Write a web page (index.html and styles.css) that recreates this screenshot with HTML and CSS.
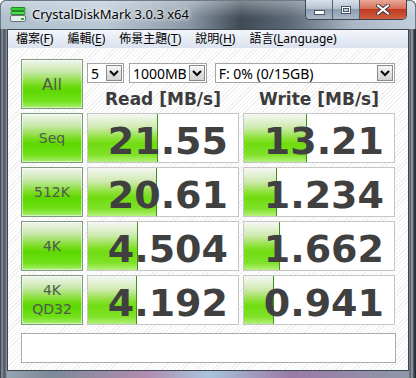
FILE: index.html
```html
<!DOCTYPE html>
<html lang="zh-Hant">
<head>
  <meta charset="UTF-8" />
  <title>CrystalDiskMark 3.0.3 x64</title>
  <link rel="stylesheet" href="styles.css">
</head>
<body>

  <div class="window">
    <div class="titlebar">
      <svg class="app-icon" width="16" height="15" viewBox="0 0 16 15">
        <rect x="1" y="0.5" width="14" height="3" rx="1" fill="#3cc83c" stroke="#1e8c1e"/>
        <rect x="1" y="4.5" width="14" height="3" rx="1" fill="#5ad85a" stroke="#1e8c1e"/>
        <rect x="0.5" y="8.5" width="15" height="6" rx="1.5" fill="#e8ecef" stroke="#6c747c"/>
        <rect x="11" y="11" width="3" height="2" fill="#2bb52b"/>
      </svg>
      <span class="title">CrystalDiskMark 3.0.3 x64</span>
      <div class="winbtns">
        <div class="wb wb-min"><span class="min-bar"></span></div>
        <div class="wb wb-max"><span class="max-box"></span></div>
        <div class="wb wb-close">
          <svg width="14" height="11" viewBox="0 0 14 11">
            <path d="M2 1.5 L12 9.5 M12 1.5 L2 9.5" stroke="#3a3a3a" stroke-width="4" stroke-linecap="round"/>
            <path d="M2 1.5 L12 9.5 M12 1.5 L2 9.5" stroke="#fff" stroke-width="2.2" stroke-linecap="round"/>
          </svg>
        </div>
      </div>
    </div>

    <div class="client">
      <div class="menubar">
        <span class="menu">檔案(<u>F</u>)</span>
        <span class="menu">編輯(<u>E</u>)</span>
        <span class="menu">佈景主題(<u>T</u>)</span>
        <span class="menu">說明(<u>H</u>)</span>
        <span class="menu">語言(<u>L</u>anguage)</span>
      </div>

      <div class="main">
        <div class="grid">
          <div class="btn">All</div>
          <div class="top-right">
            <div class="selects">
              <div class="select sel-count"><span>5</span><i class="arrow"></i></div>
              <div class="select sel-size"><span>1000MB</span><i class="arrow"></i></div>
              <div class="select sel-drive"><span>F: 0% (0/15GB)</span><i class="arrow"></i></div>
            </div>
            <div class="heads">
              <div class="head">Read [MB/s]</div>
              <div class="head">Write [MB/s]</div>
            </div>
          </div>

          <div class="btn">Seq</div>
          <div class="cell"><div class="bar" style="width: 69px"></div><span class="val">21.55</span></div>
          <div class="cell"><div class="bar" style="width: 62px"></div><span class="val">13.21</span></div>

          <div class="btn">512K</div>
          <div class="cell"><div class="bar" style="width: 68px"></div><span class="val">20.61</span></div>
          <div class="cell"><div class="bar" style="width: 32px"></div><span class="val">1.234</span></div>

          <div class="btn">4K</div>
          <div class="cell"><div class="bar" style="width: 49px"></div><span class="val">4.504</span></div>
          <div class="cell"><div class="bar" style="width: 35px"></div><span class="val">1.662</span></div>

          <div class="btn two-line">4K<br>QD32</div>
          <div class="cell"><div class="bar" style="width: 48px"></div><span class="val">4.192</span></div>
          <div class="cell"><div class="bar" style="width: 29px"></div><span class="val">0.941</span></div>
        </div>

        <div class="comment"></div>
      </div>
    </div>
  </div>

</body>
</html>
```

FILE: styles.css
```css
html, body {
  margin: 0;
  padding: 0;
}

body {
  width: 416px;
  height: 378px;
  overflow: hidden;
  font-family: "Noto Sans", "Noto Sans CJK TC", sans-serif;
}

/* Aero glass frame */
.window {
  width: 416px;
  height: 378px;
  box-sizing: border-box;
  padding: 0 7px 7px 7px;
  display: flex;
  flex-direction: column;
  border-radius: 6px 6px 0 0;
  background:
    linear-gradient(90deg, #2c3036 0, #8c98a4 2px, #4a525c 4px, #6c7884 6px, transparent 7px,
                    transparent 409px, #4a525c 410px, #9aa6b2 412px, #3a4048 414px, #23272c 416px),
    linear-gradient(90deg, #9aa8b4 0, #7c8a98 12%, #b08cb0 35%, #a8c4dc 50%, #9a7aa8 70%, #8e9aa8 100%);
}

.titlebar {
  height: 29px;
  margin: 0 -7px;
  padding: 0 8px 0 9px;
  display: flex;
  align-items: flex-start;
  border-radius: 6px 6px 0 0;
  border: 1px solid #6b7a88;
  border-bottom: none;
  box-sizing: border-box;
  background:
    linear-gradient(rgba(255,255,255,0.35), rgba(255,255,255,0) 60%),
    linear-gradient(90deg, #aebfce 0, #b9c8d5 25%, #8c9aa8 45%, #3f4a55 58%, #5d6a77 70%, #a9b8c6 85%, #c2ceda 100%);
}

.app-icon {
  margin-top: 6px;
  flex: none;
}

.title {
  margin: 4px 0 0 6px;
  font-size: 13px;
  color: #000;
  text-shadow: 0 0 6px #fff, 0 0 3px #fff;
}

.winbtns {
  margin-left: auto;
  margin-top: -1px;
  display: flex;
  height: 19px;
  border: 1px solid #3c4450;
  border-top: none;
  border-radius: 0 0 5px 5px;
  overflow: hidden;
}

.wb {
  display: flex;
  align-items: center;
  justify-content: center;
  height: 19px;
}

.wb-min, .wb-max {
  width: 26px;
  border-right: 1px solid #55606c;
  background: linear-gradient(#d8e0e8, #b4c2d0 45%, #8e9eae 50%, #a8b8c8 100%);
}

.min-bar {
  display: block;
  width: 9px;
  height: 3px;
  margin-top: 6px;
  background: #fff;
  border: 1px solid #4a5460;
}

.max-box {
  display: block;
  width: 8px;
  height: 6px;
  border: 1px solid #4a5460;
  box-shadow: inset 0 0 0 1px #fff, inset 0 0 0 2px #4a5460;
  background: #c8d2dc;
}

.wb-close {
  width: 46px;
  background: linear-gradient(#e8a898, #d8705a 45%, #c03a20 50%, #d06040 100%);
}

/* client area */
.client {
  flex: 1;
  display: flex;
  flex-direction: column;
  border: 1px solid #3e4852;
  background: #fff;
}

.menubar {
  height: 18px;
  display: flex;
  align-items: center;
  gap: 2px;
  padding-left: 2px;
  font-size: 12px;
  color: #000;
  background: linear-gradient(#f4f6fb, #e4e9f3 60%, #dce3ef);
  border-bottom: 1px solid #f8f9fc;
}

.menu {
  padding: 0 6px;
  line-height: 18px;
}

.menu u {
  text-decoration-thickness: 1px;
  text-underline-offset: 2px;
}

.main {
  flex: 1;
  padding: 10px 0 0 13px;
  background: repeating-linear-gradient(135deg, #ffffff 0 2px, #efefef 2px 3px);
}

.grid {
  display: grid;
  grid-template-columns: 62px 152px 152px;
  grid-auto-rows: 50px;
  column-gap: 4px;
  row-gap: 4px;
}

/* green buttons */
.btn {
  box-sizing: border-box;
  border: 1px solid #7f9a7c;
  box-shadow: inset 0 0 0 1px rgba(255,255,255,0.5);
  background: linear-gradient(#f2f5f0 0%, #c6e8a8 25%, #78dc1c 52%, #5cd800 62%, #70e018 85%, #a8ee70 100%);
  display: flex;
  align-items: center;
  justify-content: center;
  text-align: center;
  font-family: "DejaVu Sans", sans-serif;
  font-size: 14px;
  color: #505a50;
}

.btn:first-child {
  font-size: 16px;
}

.two-line {
  line-height: 19px;
}

.top-right {
  grid-column: 2 / 4;
  display: flex;
  flex-direction: column;
}

.selects {
  display: flex;
  margin-top: 4px;
  height: 20px;
}

.select {
  box-sizing: border-box;
  height: 20px;
  display: flex;
  align-items: center;
  justify-content: space-between;
  border: 1px solid #a4a4a4;
  background: #fff;
  font-size: 14px;
  color: #000;
  padding-left: 3px;
}

.sel-count { width: 37px; }
.sel-size { width: 78px; margin-left: 5px; }
.sel-drive { width: 181px; margin-left: 8px; }

.arrow {
  width: 16px;
  height: 16px;
  margin-right: 1px;
  box-sizing: border-box;
  border: 1px solid #8a8a8a;
  background:
    url("data:image/svg+xml,%3Csvg xmlns='http://www.w3.org/2000/svg' width='14' height='14'%3E%3Cpath d='M3 5 L7 9 L11 5' fill='none' stroke='%23000' stroke-width='2'/%3E%3C/svg%3E") center no-repeat,
    linear-gradient(#f6f6f6, #e2e2e2 50%, #d2d2d2);
}

.heads {
  display: grid;
  grid-template-columns: 152px 152px;
  column-gap: 4px;
  margin-top: 6px;
}

.head {
  text-align: center;
  font-family: "DejaVu Sans", sans-serif;
  font-weight: bold;
  font-size: 17px;
  line-height: 20px;
  color: #3c3c3c;
}

/* result cells */
.cell {
  position: relative;
  box-sizing: border-box;
  border: 1px solid #c6c6c6;
  background: #fff;
  overflow: hidden;
}

.bar {
  position: absolute;
  left: 0;
  top: 0;
  bottom: 0;
  border-right: 1px solid #3f8f22;
  background: linear-gradient(#f6f8f4 0%, #cfeab0 28%, #88e030 52%, #70dc10 62%, #80e228 85%, #b4f07c 100%);
}

.val {
  position: relative;
  display: block;
  text-align: right;
  padding: 6px 10px 0 0;
  line-height: 42px;
  font-family: "DejaVu Sans", sans-serif;
  font-weight: bold;
  font-size: 38px;
  color: #404040;
}

.comment {
  width: 375px;
  height: 30px;
  margin-top: 8px;
  box-sizing: border-box;
  border: 1px solid #ababab;
  background: #fff;
}
```
